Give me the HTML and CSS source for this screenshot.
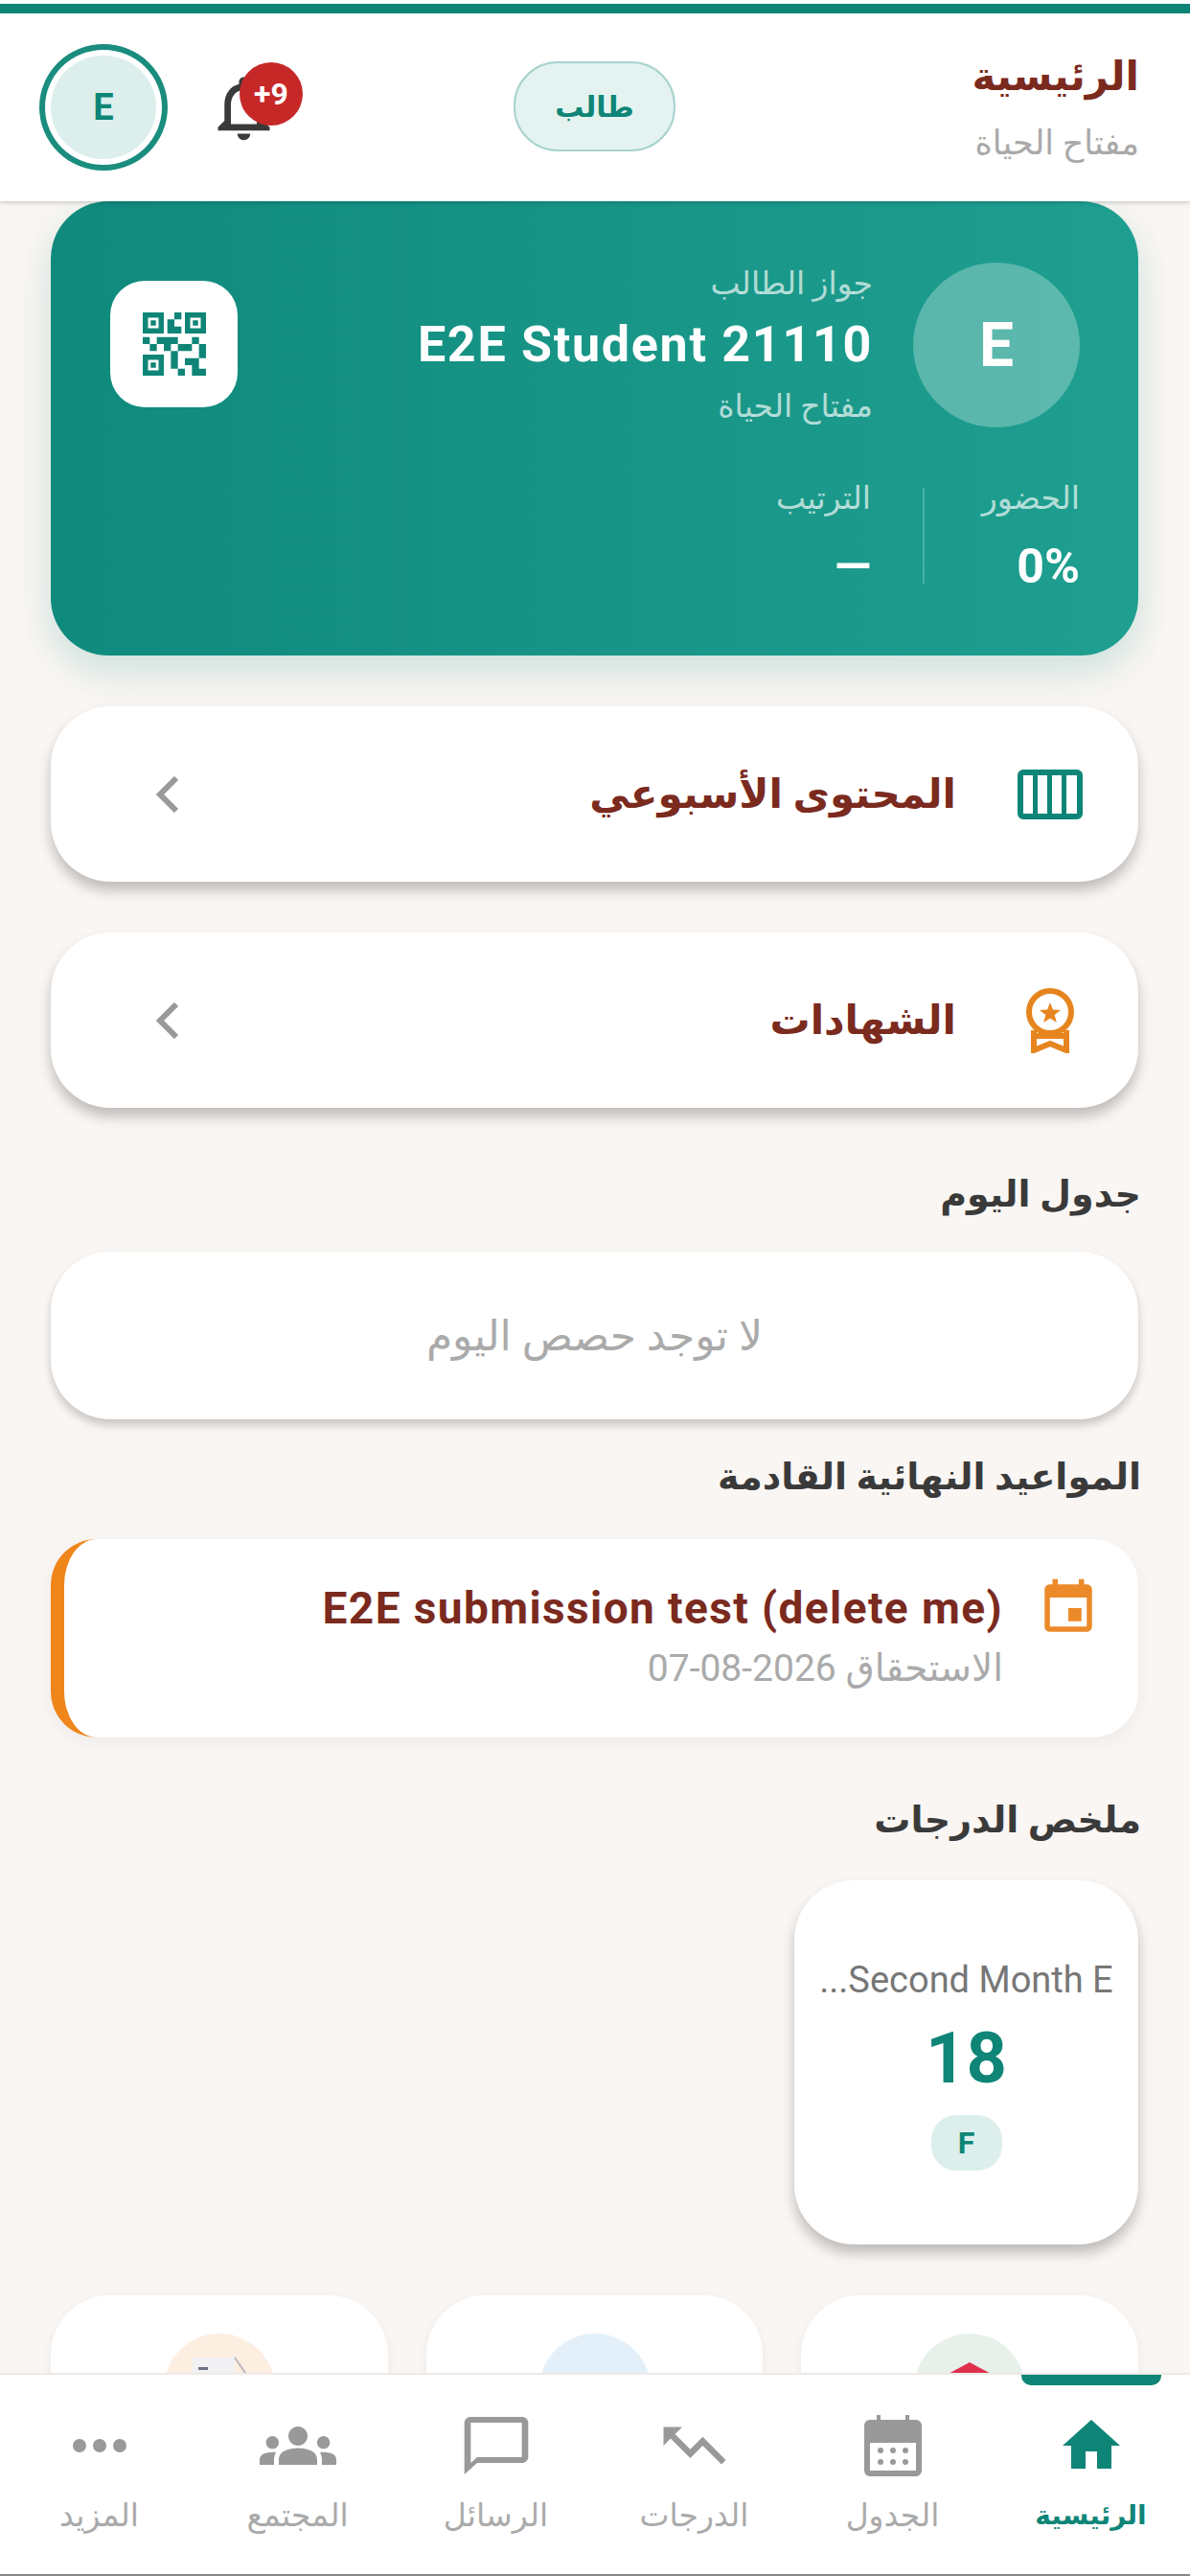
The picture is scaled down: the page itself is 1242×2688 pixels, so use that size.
FILE: index.html
```html
<!DOCTYPE html>
<html lang="ar" dir="rtl">
<head>
  <meta charset="UTF-8">
  <meta name="viewport" content="width=device-width, initial-scale=1.0">
  <title>الرئيسية - مفتاح الحياة</title>
  <link rel="stylesheet" href="styles.css">
</head>
<body>

  <header class="topbar">
    <div class="topbar-stripe"></div>
    <div class="topbar-row">
      <div class="topbar-title">
        <h1>الرئيسية</h1>
        <p>مفتاح الحياة</p>
      </div>
      <span class="role-chip">طالب</span>
      <div class="topbar-actions">
        <div class="bell">
          <svg viewBox="0 0 24 24" width="81" height="81"><path d="M12 22c1.1 0 2-.9 2-2h-4c0 1.1.89 2 2 2zm6-6v-5c0-3.07-1.64-5.64-4.5-6.32V4c0-.83-.67-1.5-1.5-1.5s-1.5.67-1.5 1.5v.68C7.63 5.36 6 7.92 6 11v5l-2 2v1h16v-1l-2-2zm-2 1H8v-6c0-2.48 1.51-4.5 4-4.5s4 2.02 4 4.5v6z"/></svg>
          <span class="bell-badge">9+</span>
        </div>
        <div class="avatar-ring"><span>E</span></div>
      </div>
    </div>
  </header>

  <main class="content">
    <section class="pass-card">
      <div class="pass-top">
        <div class="pass-avatar">E</div>
        <div class="pass-info">
          <p class="pass-muted">جواز الطالب</p>
          <p class="pass-name">E2E Student 21110</p>
          <p class="pass-muted">مفتاح الحياة</p>
        </div>
        <div class="pass-qr">
          <svg viewBox="0 0 24 24" width="88" height="88"><path d="M15,21h-2v-2h2V21z M13,14h-2v5h2V14z M21,12h-2v4h2V12z M19,10h-2v2h2V10z M7,12H5v2h2V12z M5,10H3v2h2V10z M12,5h2V3h-2V5z M4.5,4.5v3h3v-3H4.5z M9,9H3V3h6V9z M4.5,16.5v3h3v-3H4.5z M9,21H3v-6h6V21z M16.5,4.5v3h3v-3H16.5z M21,9h-6V3h6V9z M19,19v-3l-4,0v2h2v3h4v-2H19z M17,12l-4,0v2h4V12z M13,10H7v2h2v2h2v-2h2V10z M14,9V7h-2V5h-2v4L14,9z M6.75,5.25h-1.5v1.5h1.5V5.25z M6.75,17.25h-1.5v1.5h1.5V17.25z M18.75,5.25h-1.5v1.5h1.5V5.25z"/></svg>
        </div>
      </div>
      <div class="pass-stats">
        <div class="stat stat-first">
          <p class="pass-muted">الحضور</p>
          <p class="stat-value">0%</p>
        </div>
        <div class="stat-divider"></div>
        <div class="stat">
          <p class="pass-muted">الترتيب</p>
          <p class="stat-value">—</p>
        </div>
      </div>
    </section>

    <a class="link-row">
      <span class="link-icon">
        <svg class="icon-teal" viewBox="0 0 68 52" width="68" height="52"><path d="M6 0h56a6 6 0 0 1 6 6v40a6 6 0 0 1-6 6H6a6 6 0 0 1-6-6V6a6 6 0 0 1 6-6zm0 6v40h10V6zm15 0v40h10V6zm15 0v40h10V6zm15 0v40h11V6z"/></svg>
      </span>
      <span class="link-text">المحتوى الأسبوعي</span>
      <svg class="chevron" viewBox="0 0 24 38" width="24" height="38"><path d="M21 2L4 19l17 17"/></svg>
    </a>

    <a class="link-row">
      <span class="link-icon">
        <svg class="medal" viewBox="0 0 54 68" width="54" height="68">
          <circle cx="27" cy="25" r="22"/>
          <path d="M10 44v21l17-7 17 7V44M10 50h34"/>
          <polygon class="medal-star" points="27,15 29.9,22.6 38,23 31.7,28.1 33.8,36 27,31.5 20.2,36 22.3,28.1 16,23 24.1,22.6"/>
        </svg>
      </span>
      <span class="link-text">الشهادات</span>
      <svg class="chevron" viewBox="0 0 24 38" width="24" height="38"><path d="M21 2L4 19l17 17"/></svg>
    </a>

    <h2 class="section-title title-today">جدول اليوم</h2>
    <div class="empty-card">لا توجد حصص اليوم</div>

    <h2 class="section-title title-deadlines">المواعيد النهائية القادمة</h2>
    <div class="deadline-card">
      <svg class="icon-orange" viewBox="0 0 24 24" width="66" height="66"><path d="M17 12h-5v5h5v-5zM16 1v2H8V1H6v2H5c-1.11 0-1.99.9-1.99 2L3 19c0 1.1.89 2 2 2h14c1.1 0 2-.9 2-2V5c0-1.1-.9-2-2-2h-1V1h-2zm3 18H5V8h14v11z"/></svg>
      <div class="deadline-text">
        <p class="deadline-name">E2E submission test (delete me)</p>
        <p class="deadline-date">الاستحقاق 2026-08-07</p>
      </div>
    </div>

    <h2 class="section-title title-grades">ملخص الدرجات</h2>
    <div class="grade-card">
      <p class="grade-exam" dir="ltr">...Second Month E</p>
      <p class="grade-score">18</p>
      <span class="grade-letter">F</span>
    </div>

    <div class="quick-grid">
      <div class="quick-card">
        <div class="quick-circle circle-green">
          <svg viewBox="0 0 116 44" width="116" height="44"><polygon fill="#e0304e" points="58,30 32,44 84,44"/></svg>
        </div>
      </div>
      <div class="quick-card">
        <div class="quick-circle circle-blue"></div>
      </div>
      <div class="quick-card">
        <div class="quick-circle circle-orange">
          <svg viewBox="0 0 116 44" width="116" height="44">
            <rect x="30" y="25" width="44" height="19" fill="#f1f1f4"/>
            <rect x="36" y="35" width="10" height="3" fill="#6b7280"/>
            <path d="M74 25l13 19" stroke="#b9b9bd" stroke-width="2" fill="none"/>
          </svg>
        </div>
      </div>
    </div>
  </main>

  <nav class="tabbar">
    <a class="tab tab-active">
      <svg viewBox="0 0 24 24" width="72" height="72"><path d="M10 20v-6h4v6h5v-8h3L12 3 2 12h3v8z"/></svg>
      <span>الرئيسية</span>
    </a>
    <a class="tab">
      <svg viewBox="0 0 60 64" width="60" height="64">
        <path fill-rule="evenodd" d="M13 0h4v5h26V0h4v5h7a6 6 0 0 1 6 6v47a6 6 0 0 1-6 6H6a6 6 0 0 1-6-6V11a6 6 0 0 1 6-6h7zM6 29v29h48V29z"/>
        <circle cx="17" cy="37" r="3"/><circle cx="30" cy="37" r="3"/><circle cx="43" cy="37" r="3"/>
        <circle cx="17" cy="49" r="3"/><circle cx="30" cy="49" r="3"/><circle cx="43" cy="49" r="3"/>
      </svg>
      <span>الجدول</span>
    </a>
    <a class="tab">
      <svg class="flip" viewBox="0 0 24 24" width="78" height="78"><path d="M16 6l2.29 2.29-4.88 4.88-4-4L2 16.59 3.41 18l6-6 4 4 6.3-6.29L22 12V6z"/></svg>
      <span>الدرجات</span>
    </a>
    <a class="tab">
      <svg viewBox="0 0 24 24" width="80" height="72" preserveAspectRatio="none"><path d="M20 2H4c-1.1 0-2 .9-2 2v18l4-4h14c1.1 0 2-.9 2-2V4c0-1.1-.9-2-2-2zm0 14H6l-2 2V4h16v12z"/></svg>
      <span>الرسائل</span>
    </a>
    <a class="tab">
      <svg viewBox="0 0 24 24" width="80" height="80"><path d="M12 12.75c1.63 0 3.07.39 4.24.9 1.08.48 1.76 1.56 1.76 2.73V18H6v-1.61c0-1.18.68-2.26 1.76-2.73 1.17-.52 2.61-.91 4.24-.91zM4 13c1.1 0 2-.9 2-2s-.9-2-2-2-2 .9-2 2 .9 2 2 2zm1.13 1.1c-.37-.06-.74-.1-1.13-.1-.99 0-1.93.21-2.78.58C.48 14.9 0 15.62 0 16.43V18h4.5v-1.61c0-.83.23-1.61.63-2.29zM20 13c1.1 0 2-.9 2-2s-.9-2-2-2-2 .9-2 2 .9 2 2 2zm4 3.43c0-.81-.48-1.53-1.22-1.85-.85-.37-1.79-.58-2.78-.58-.39 0-.76.04-1.13.1.4.68.63 1.46.63 2.29V18H24v-1.57zM12 6c1.66 0 3 1.34 3 3s-1.34 3-3 3-3-1.34-3-3 1.34-3 3-3z"/></svg>
      <span>المجتمع</span>
    </a>
    <a class="tab">
      <svg viewBox="0 0 56 16" width="56" height="16"><circle cx="7" cy="8" r="7"/><circle cx="28" cy="8" r="7"/><circle cx="49" cy="8" r="7"/></svg>
      <span>المزيد</span>
    </a>
  </nav>

</body>
</html>
```

FILE: styles.css
```css
* {
  margin: 0;
  padding: 0;
  box-sizing: border-box;
}

body {
  width: 1242px;
  height: 2688px;
  overflow: hidden;
  display: flex;
  flex-direction: column;
  font-family: Roboto, "DejaVu Sans", sans-serif;
  background-color: #faf6f3;
  color: #333;
}

/* Top bar */
.topbar {
  height: 210px;
  flex-shrink: 0;
  background-color: #fff;
  box-shadow: 0 1px 5px rgba(0, 0, 0, 0.22);
  position: relative;
  z-index: 2;
}

.topbar-stripe {
  height: 10px;
  margin-top: 4px;
  background-color: #0f8577;
}

.topbar-row {
  height: 196px;
  padding: 0 53px 0 41px;
  display: flex;
  align-items: center;
  justify-content: space-between;
}

.topbar-title {
  width: 243px;
  margin-top: -2px;
}

.topbar-title h1 {
  font-size: 42px;
  line-height: 62px;
  color: #7b2a1e;
}

.topbar-title p {
  font-size: 35px;
  line-height: 46px;
  margin-top: 16px;
  color: #a9a9a9;
}

.role-chip {
  width: 169px;
  height: 94px;
  margin-top: -2px;
  display: flex;
  align-items: center;
  justify-content: center;
  background-color: #e4f3f0;
  border: 2px solid #a8d3cd;
  border-radius: 46px;
  font-size: 30px;
  font-weight: bold;
  color: #0f8577;
}

.topbar-actions {
  display: flex;
  align-items: center;
  gap: 39px;
}

.bell {
  width: 81px;
  height: 81px;
  position: relative;
  fill: #3a3a3a;
}

.bell svg {
  display: block;
}

.bell-badge {
  position: absolute;
  top: -7px;
  left: 36px;
  width: 66px;
  height: 66px;
  display: flex;
  align-items: center;
  justify-content: center;
  background-color: #c62828;
  border-radius: 50%;
  color: #fff;
  font-size: 32px;
  font-weight: bold;
}

.avatar-ring {
  width: 134px;
  height: 132px;
  padding: 6px;
  border: 6px solid #1a8d7f;
  border-radius: 50%;
}

.avatar-ring span {
  width: 100%;
  height: 100%;
  display: flex;
  align-items: center;
  justify-content: center;
  background-color: #dcefec;
  border-radius: 50%;
  color: #0f8577;
  font-size: 38px;
  font-weight: bold;
}

.content {
  flex: 1;
  min-height: 0;
  overflow: hidden;
  padding: 0 54px 0 53px;
}

.pass-card {
  height: 474px;
  padding: 63px 61px 0 62px;
  background: linear-gradient(90deg, #0f8a7c, #1f9f90);
  border-radius: 60px;
  box-shadow: 0 16px 40px rgba(15, 138, 124, 0.2);
  color: #fff;
}

.pass-top {
  display: flex;
  align-items: center;
  gap: 42px;
}

.pass-avatar {
  width: 174px;
  height: 172px;
  flex-shrink: 0;
  display: flex;
  align-items: center;
  justify-content: center;
  background-color: rgba(255, 255, 255, 0.28);
  border-radius: 50%;
  font-size: 64px;
  font-weight: bold;
}

.pass-info {
  flex: 1;
}

.pass-muted {
  font-size: 33px;
  line-height: 46px;
  color: rgba(255, 255, 255, 0.68);
}

.pass-name {
  font-size: 52px;
  line-height: 70px;
  margin: 6px 0;
  font-weight: bold;
  letter-spacing: 1.7px;
}

.pass-qr {
  width: 133px;
  height: 132px;
  display: flex;
  align-items: center;
  justify-content: center;
  background-color: #fff;
  border-radius: 36px;
  fill: #0f8577;
  margin-top: -2px;
}

.pass-stats {
  margin-top: 50px;
  display: flex;
  align-items: center;
}

.stat-first {
  width: 162px;
}

.stat-divider {
  width: 2px;
  height: 100px;
  margin-left: 54px;
  background-color: rgba(255, 255, 255, 0.2);
}

.stat-value {
  font-size: 50px;
  line-height: 60px;
  margin-top: 18px;
  font-weight: bold;
}

/* Link rows */
.link-row {
  height: 183px;
  margin-top: 53px;
  padding: 0 58px 0 110px;
  display: flex;
  align-items: center;
  gap: 64px;
  background-color: #fff;
  border-radius: 62px;
  box-shadow: 0 9px 14px rgba(0, 0, 0, 0.24);
}

.link-icon {
  width: 68px;
  display: flex;
  justify-content: center;
}

.link-text {
  flex: 1;
  font-size: 42px;
  font-weight: bold;
  color: #7b2a1e;
}

.icon-teal {
  fill: #0f8577;
  fill-rule: evenodd;
}

.medal {
  fill: none;
  stroke: #e6851f;
  stroke-width: 6;
}

.medal-star {
  fill: #e6851f;
  stroke: none;
}

.chevron {
  fill: none;
  stroke: #999;
  stroke-width: 6;
}

/* Section titles */
.section-title {
  font-size: 38px;
  line-height: 60px;
  font-weight: bold;
  color: #3a3a3a;
  margin-right: -3px;
}

.title-today {
  margin-top: 60px;
  margin-bottom: 30px;
}

.title-deadlines {
  margin-top: 30px;
  margin-bottom: 35px;
}

.title-grades {
  margin-top: 56px;
  margin-bottom: 33px;
}

.empty-card {
  height: 175px;
  display: flex;
  align-items: center;
  justify-content: center;
  background-color: #fff;
  border-radius: 62px;
  box-shadow: 0 6px 10px rgba(0, 0, 0, 0.2);
  font-size: 44px;
  color: #aaa;
}

.deadline-card {
  height: 207px;
  padding: 39px 40px 0 0;
  display: flex;
  align-items: flex-start;
  gap: 35px;
  background-color: #fff;
  border-left: 14px solid #f0851a;
  border-radius: 48px;
  box-shadow: 0 6px 20px rgba(0, 0, 0, 0.05);
}

.icon-orange {
  fill: #ec8a2a;
  flex-shrink: 0;
}

.deadline-text {
  padding-top: 3px;
}

.deadline-name {
  font-size: 46px;
  line-height: 60px;
  font-weight: bold;
  letter-spacing: 1.4px;
  color: #7b2a1e;
}

.deadline-date {
  font-size: 39px;
  line-height: 60px;
  margin-top: 3px;
  color: #aaa;
}

/* Grade summary */
.grade-card {
  width: 359px;
  height: 380px;
  padding-top: 74px;
  display: flex;
  flex-direction: column;
  align-items: center;
  background-color: #fff;
  border-radius: 62px;
  box-shadow: 0 9px 14px rgba(0, 0, 0, 0.24);
}

.grade-exam {
  font-size: 38px;
  line-height: 60px;
  color: #777;
  white-space: nowrap;
}

.grade-score {
  font-size: 74px;
  line-height: 80px;
  margin-top: 12px;
  font-weight: bold;
  color: #0f8577;
}

.grade-letter {
  width: 74px;
  height: 58px;
  margin-top: 19px;
  display: flex;
  align-items: center;
  justify-content: center;
  background-color: #dcefec;
  border-radius: 26px;
  font-size: 32px;
  font-weight: bold;
  color: #0f8577;
}

/* Quick access cards, cut off by the tab bar */
.quick-grid {
  margin-top: 53px;
  display: grid;
  grid-template-columns: repeat(3, 1fr);
  gap: 40px;
}

.quick-card {
  height: 200px;
  padding-top: 40px;
  display: flex;
  justify-content: center;
  background-color: #fff;
  border-radius: 62px;
  box-shadow: 0 4px 12px rgba(0, 0, 0, 0.06);
}

.quick-circle {
  width: 116px;
  height: 116px;
  border-radius: 50%;
  overflow: hidden;
}

.quick-circle svg {
  display: block;
}

.circle-green {
  background-color: #e8f0ea;
}

.circle-blue {
  background-color: #e3f0f9;
}

.circle-orange {
  background-color: #fdeee2;
}

/* Tab bar */
.tabbar {
  height: 212px;
  flex-shrink: 0;
  display: grid;
  grid-template-columns: repeat(6, 1fr);
  background-color: #fff;
  border-top: 2px solid #eeeae6;
  border-bottom: 2px solid #888;
  position: relative;
  z-index: 2;
}

.tab {
  height: 208px;
  padding-bottom: 36px;
  position: relative;
  display: flex;
  flex-direction: column;
  align-items: center;
  justify-content: flex-end;
  fill: #999;
  color: #aaa;
  font-size: 33px;
  line-height: 50px;
}

/* all tab icons share one centre line */
.tab svg {
  position: absolute;
  top: 74px;
  left: 50%;
  transform: translate(-50%, -50%);
}

.tab svg.flip {
  transform: translate(-50%, -50%) scaleX(-1);
}

.tab-active {
  fill: #0f8577;
  color: #0f8577;
  font-size: 28px;
  font-weight: bold;
}

.tab-active::before {
  content: "";
  position: absolute;
  top: 0;
  left: 31px;
  width: 146px;
  height: 11px;
  background-color: #0f8577;
  border-radius: 0 0 10px 10px;
}
```
